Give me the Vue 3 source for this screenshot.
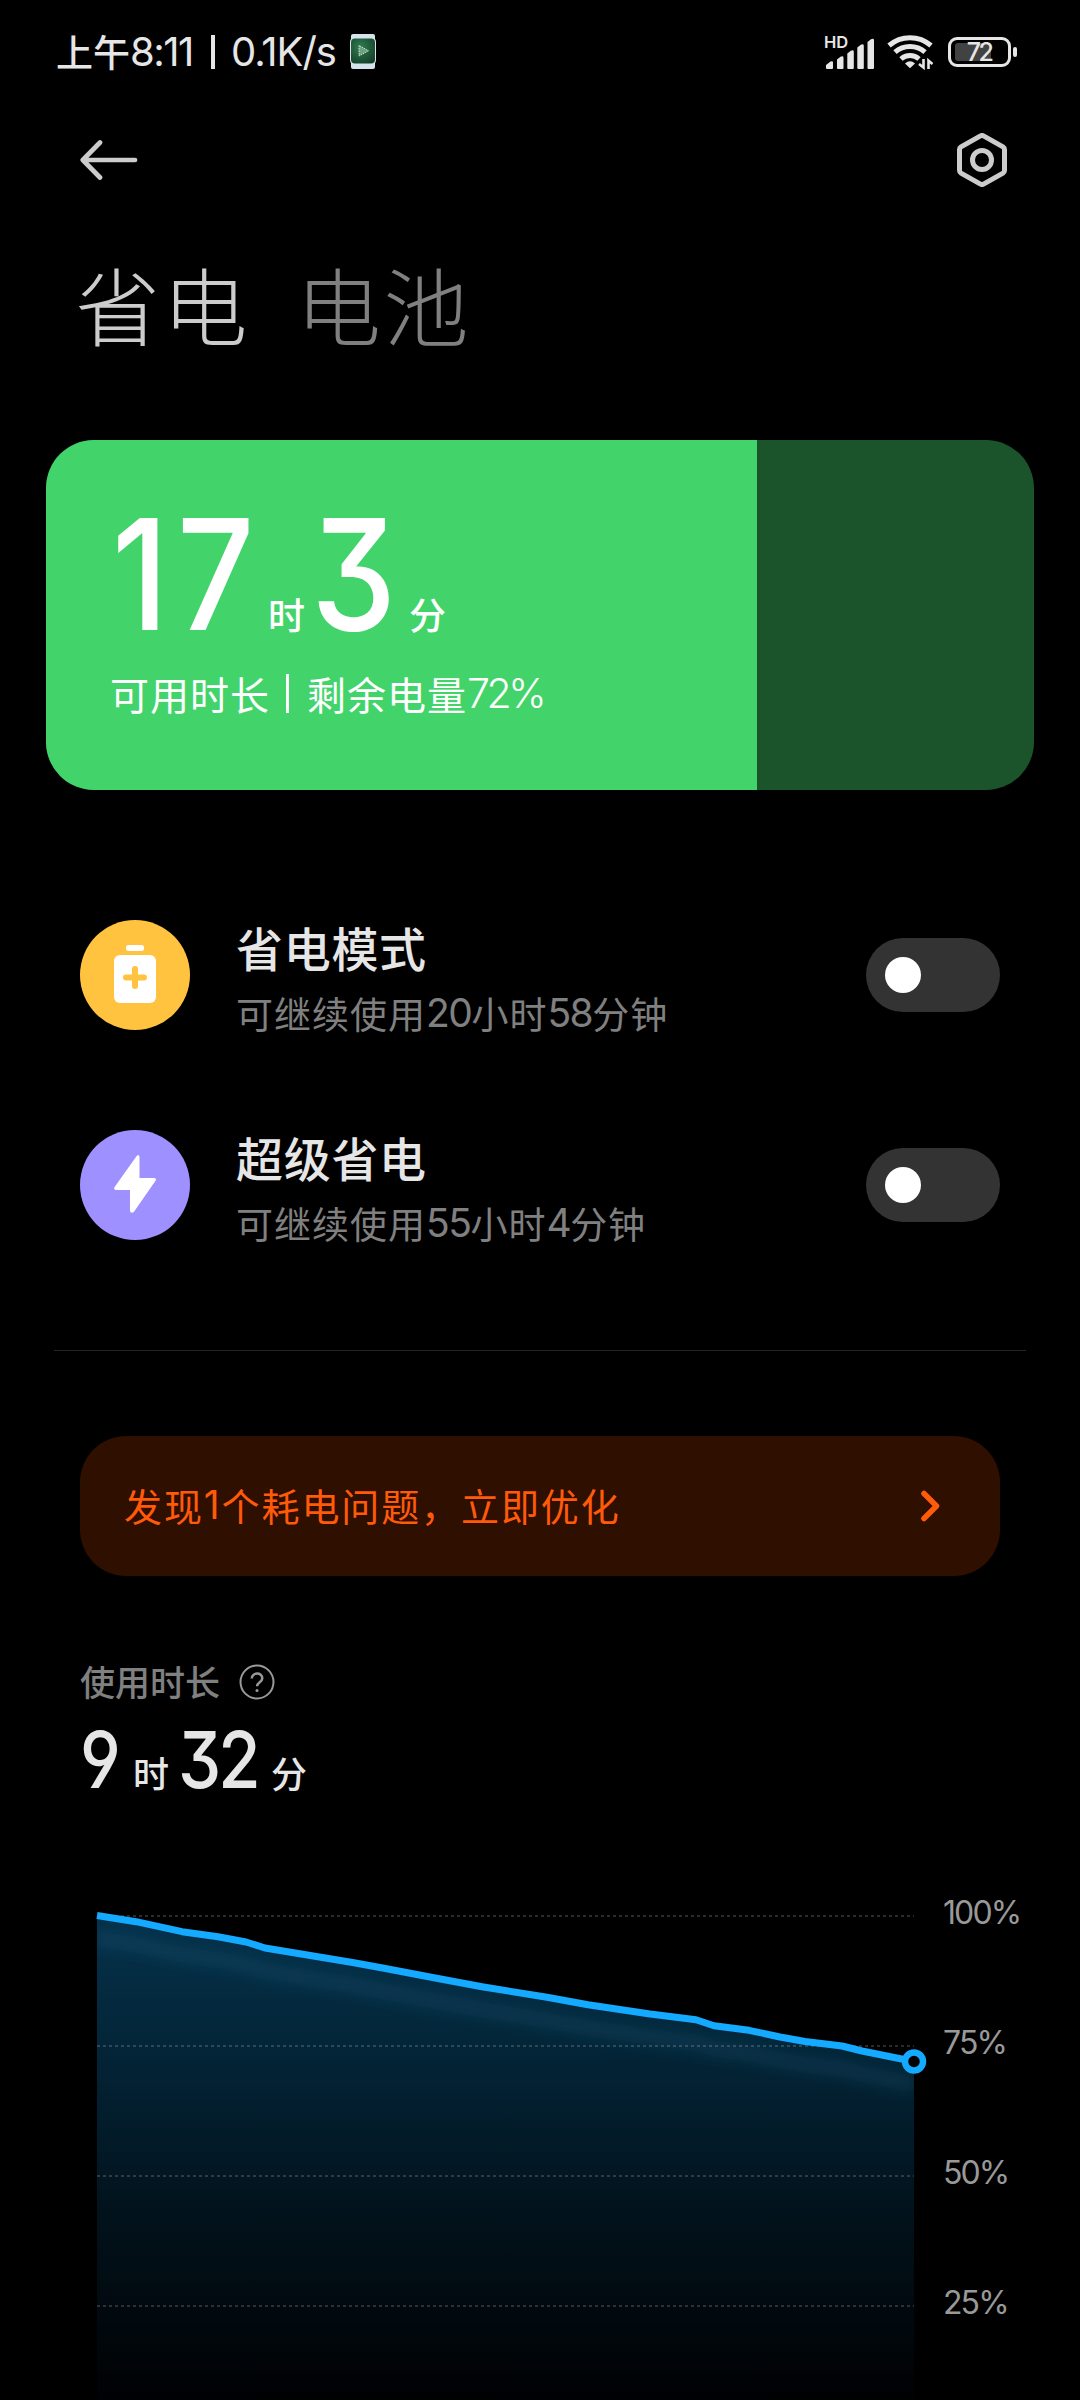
<script setup>
import { computed } from 'vue'

const batteryLevel = 72

const modes = [
  { id: 'saver', title: '省电模式', parts: ['可继续使用', '20', '小时', '58', '分钟'] },
  { id: 'ultra', title: '超级省电', parts: ['可继续使用', '55', '小时', '4', '分钟'] },
]

const gridLines = [
  { label: '100%', y: 116 },
  { label: '75%', y: 246 },
  { label: '50%', y: 376 },
  { label: '25%', y: 506 },
]

const points = [
  [97, 115.5], [136, 121.7], [182, 131.7], [218, 136.7], [246, 142], [265, 148],
  [354, 162.7], [384, 168.3], [436.5, 178.3], [482, 186.7], [547, 197.3], [588, 204.7],
  [650, 214], [696, 219.7], [714, 225.7], [749, 230.3], [780, 237], [805, 241.5],
  [842, 246], [862, 251], [914, 261.5],
]
const line = computed(() => 'M' + points.map((p) => p.join(' ')).join('L'))
const area = computed(() => line.value + 'V600H97Z')
</script>

<template>
  <main class="screen">
    <header class="status">
      <div class="status-left">
        <span class="zh">上午</span><span class="num clock">8:11</span><i class="bar"></i><span class="num speed">0.1K/s</span>
        <svg class="watch" width="26" height="36" viewBox="0 0 26 36">
          <defs>
            <radialGradient id="face" cx="40%" cy="35%" r="75%">
              <stop offset="0" stop-color="#2f7d50" /><stop offset="1" stop-color="#163f28" />
            </radialGradient>
          </defs>
          <rect x="1" y="0" width="24" height="35" rx="2" fill="#d5e3ec" />
          <rect x="0" y="4" width="26" height="26" rx="4" fill="#d5e3ec" />
          <rect x="1" y="4.500" width="24" height="25" rx="4" fill="url(#face)" />
          <path d="M9 11.500V22L18.500 16.800Z" fill="#6fa183" stroke="#cfe3d6" stroke-width="1" stroke-dasharray="1.500 1" />
        </svg>
      </div>
      <div class="status-right">
        <svg class="signal" width="54" height="56" viewBox="0 -10 54 56" fill="#e6e6e6">
          <text x="0" y="13" class="hd">HD</text>
          <path d="M2 33v-3l4.500-3.500q2.500-1 2.500 1V33q0 1-1 1H3q-1 0-1-1zM13 33v-8.500l3.500-2.800q3-1 3 1V33q0 1-1 1H14q-1 0-1-1zM23.300 33V18.500l3.500-2.800q3-1 3 1V33q0 1-1 1h-4.500q-1 0-1-1zM33.300 33V12.500l3.500-2.800q3-1 3 1V33q0 1-1 1h-4.500q-1 0-1-1zM43.500 33V7l3.500-2.800q3-1 3 1V33q0 1-1 1h-4.500q-1 0-1-1z" />
        </svg>
        <svg class="wifi" width="46" height="36" viewBox="0 0 46 36" fill="none" stroke="#e6e6e6" stroke-width="5">
          <path d="M2 11.500a32 32 0 0 1 42 0" />
          <path d="M8 18.200a22.500 22.500 0 0 1 30 0" />
          <path d="M14 25a13.500 13.500 0 0 1 18 0" />
          <path d="M18 29.500q5-4.500 10 0l-5 4.700z" fill="#e6e6e6" stroke="none" />
          <path d="M31 29h8v7h-8z" fill="#000" stroke="none" />
          <path d="M36.500 25v8.500l-4.500-3.500M41.500 35v-8.500l4 3.500" stroke-width="2.600" />
        </svg>
        <svg class="battery" width="70" height="30" viewBox="0 0 70 30">
          <rect x="1.500" y="1.500" width="60" height="27" rx="7.500" fill="none" stroke="#e6e6e6" stroke-width="3" />
          <rect x="7" y="6" width="36" height="18" rx="3" fill="#424242" />
          <rect x="65" y="10" width="4" height="10" rx="2" fill="#e6e6e6" />
          <text x="31" y="24" text-anchor="middle" class="level">{{ batteryLevel }}</text>
        </svg>
      </div>
    </header>

    <nav class="toolbar">
      <svg width="58" height="40" viewBox="0 0 58 40" fill="none" stroke="#ccc" stroke-width="4.700" stroke-linecap="round" stroke-linejoin="round">
        <path d="M55 20H3M20 2.500 2.800 20 20 37.500" />
      </svg>
      <svg width="50" height="54" viewBox="0 0 50 54" fill="none" stroke="#ccc" stroke-width="5">
        <path stroke-linejoin="round" d="M23.500 2.900q1.500-.8 3 0L46 13.900q1.500.9 1.500 2.500v21.200q0 1.600-1.500 2.500L26.500 51.100q-1.500.8-3 0L4 40.100q-1.500-.9-1.500-2.500V16.400q0-1.600 1.500-2.500z" />
        <circle cx="25" cy="27" r="9.500" />
      </svg>
    </nav>

    <div class="tabs">
      <span class="tab active">省电</span>
      <span class="tab">电池</span>
    </div>

    <section class="card">
      <div class="card-fill" :style="{ width: batteryLevel + '%' }">
        <div class="remain">
          <b class="num">17</b><small>时</small><b class="num three">3</b><small class="min">分</small>
        </div>
        <div class="card-sub">
          <span>可用时长</span><i></i><span>剩余电量</span><span class="num">{{ batteryLevel }}%</span>
        </div>
      </div>
    </section>

    <section class="modes">
      <article v-for="m in modes" :key="m.id" class="mode">
        <div class="mode-icon" :class="m.id">
          <svg v-if="m.id === 'saver'" width="42" height="58" viewBox="0 0 42 58">
            <rect x="12" y="0" width="18" height="6" rx="2.500" fill="#fff" />
            <rect x="0" y="10" width="42" height="48" rx="6" fill="#fff" />
            <path d="M21 24v17M12 32.500h18" stroke="#ffc340" stroke-width="6" stroke-linecap="round" />
          </svg>
          <svg v-else width="42" height="58" viewBox="0 0 42 58">
            <path d="M22.500 1.200Q25-1.500 25.500 2V23H40q3 .2 1.500 2.800L20 56.800q-3 2.400-4-.8V35H1.800Q-.8 34.600.6 32z" fill="#fff" />
          </svg>
        </div>
        <div class="mode-text">
          <h3>{{ m.title }}</h3>
          <p><span v-for="(t, i) in m.parts" :key="i" :class="{ num: i % 2 === 1 }">{{ t }}</span></p>
        </div>
        <div class="toggle"><i></i></div>
      </article>
    </section>

    <hr class="rule" />

    <section class="notice">
      <p><span>发现</span><span class="num">1</span><span>个耗电问题，立即优化</span></p>
      <svg width="22" height="34" viewBox="0 0 22 34" fill="none" stroke="#ff5c0a" stroke-width="5.500" stroke-linecap="round" stroke-linejoin="round">
        <path d="M4 4.500l12.500 12.500L4 29.500" />
      </svg>
    </section>

    <section class="usage">
      <div class="usage-label">
        <span>使用时长</span>
        <svg width="36" height="36" viewBox="0 0 36 36" fill="none" stroke="#999" stroke-width="2">
          <circle cx="18" cy="18" r="16.500" />
          <path d="M12.800 14.500c0-6.500 10.500-6.500 10.500-.2 0 4-5.200 4-5.200 8" stroke-width="2.500" />
          <circle cx="18" cy="26.500" r="1.500" fill="#999" stroke="none" />
        </svg>
      </div>
      <div class="usage-time">
        <b class="num">9</b><small>时</small><b class="num two">32</b><small class="min">分</small>
      </div>
    </section>

    <svg class="chart" width="1080" height="600" viewBox="0 0 1080 600">
      <defs>
        <linearGradient id="fade" gradientUnits="userSpaceOnUse" x1="0" y1="110" x2="0" y2="600">
          <stop offset="0" stop-color="#05324c" />
          <stop offset=".3" stop-color="#032436" />
          <stop offset=".6" stop-color="#02131d" />
          <stop offset="1" stop-color="#000103" />
        </linearGradient>
        <filter id="soft" x="-10%" y="-30%" width="120%" height="160%"><feGaussianBlur stdDeviation="7" /></filter>
        <clipPath id="under"><path :d="area" /></clipPath>
      </defs>
      <path :d="area" fill="url(#fade)" />
      <g clip-path="url(#under)">
        <path :d="line" transform="translate(0 23)" fill="none" stroke="#2a7096" stroke-opacity=".2" stroke-width="16" filter="url(#soft)" />
      </g>
      <g v-for="g in gridLines" :key="g.label">
        <path :d="`M97 ${g.y}H914`" stroke="#fff" stroke-opacity=".17" stroke-width="2" stroke-dasharray="3 3" />
        <text x="943" :y="g.y + 8" class="axis">{{ g.label }}</text>
      </g>
      <path :d="line" fill="none" stroke="#14aaff" stroke-width="7" stroke-linejoin="round" />
      <circle cx="914" cy="261.500" r="9" fill="#000" stroke="#14aaff" stroke-width="6.500" />
    </svg>
  </main>
</template>

<style>
body { background: #000; }
</style>

<style scoped>
.screen {
  width: 1080px; height: 2400px; overflow: hidden; background: #000; color: #e6e6e6;
  font-family: "Noto Sans CJK SC", sans-serif; display: flex; flex-direction: column;
}
.num, .axis, .hd, .level { font-family: Inter, "Noto Sans CJK SC", sans-serif; font-feature-settings: "cv09", "cv04", "kern"; }
b, small, h3, p { margin: 0; font-weight: 500; }
svg { display: block; flex: none; }
span, b, small { white-space: nowrap; }

.status { height: 106px; flex: none; display: flex; justify-content: space-between; padding: 0 62px 0 56px; }
.status-left { display: flex; align-items: center; height: 104px; font-weight: 500; }
.status-left .zh { font-size: 37px; line-height: 102px; padding-bottom: 2px; }
.clock, .speed { font-size: 40px; line-height: 104px; letter-spacing: -1.500px; font-weight: 430; }
.clock { width: 65px; }
.bar { width: 4px; height: 34px; background: #e6e6e6; margin: 0 16px 0 16px; }
.speed { width: 107px; letter-spacing: -1px; }
.watch { margin-left: 12px; }
.status-right { display: flex; align-items: center; height: 104px; }
.hd { font-size: 16.500px; font-weight: 600; }
.signal { margin-top: 2px; }
.wifi { margin-left: 9px; }
.battery { margin-left: 15px; }
.level { font-size: 25px; font-weight: 500; fill: #e6e6e6; letter-spacing: -2.500px; }

.toolbar { height: 108px; flex: none; display: flex; justify-content: space-between; align-items: center; padding: 0 73px 0 80px; }
.tabs { height: 226px; flex: none; display: flex; padding-left: 75px; gap: 46px; }
.tab { font-size: 85px; font-weight: 300; line-height: 177px; letter-spacing: 2.500px; color: #808080; }
.tab.active { color: #ccc; }

.card { height: 350px; flex: none; margin: 0 46px; border-radius: 48px; background: #1b542b; overflow: hidden; display: flex; }
.card-fill { background: #42d46a; color: #fff; padding: 44px 0 0 66px; box-sizing: border-box; }
.remain { display: flex; height: 184px; align-items: baseline; line-height: 180px; }
.remain b { font-size: 154px; font-weight: 450; letter-spacing: 10px; width: 156px; transform: scaleX(.88); transform-origin: left; }
.remain small { font-size: 37px; width: 43px; }
.remain .three { width: 98px; }
.card-sub { display: flex; align-items: center; height: 50px; margin-left: -2px; font-size: 39px; letter-spacing: 1px; line-height: 50px; font-weight: 400; }
.card-sub i { width: 3px; height: 39px; background: #fff; margin: 0 18px 0 16px; }
.card-sub .num { font-size: 41px; letter-spacing: -3.500px; font-weight: 360; }

.modes { padding-top: 130px; flex: none; }
.mode { height: 110px; margin-bottom: 100px; padding: 0 80px; display: flex; align-items: center; }
.mode-icon { width: 110px; height: 110px; border-radius: 50%; display: flex; align-items: center; justify-content: center; flex: none; }
.mode-icon svg { margin-bottom: 2px; }
.saver { background: #ffc340; }
.ultra { background: #9e91ff; }
.mode-text { margin-left: 46px; flex: 1; padding-top: 7px; }
.mode-text h3 { font-size: 47px; line-height: 60px; letter-spacing: .7px; }
.mode-text p { display: flex; font-size: 37px; line-height: 56px; letter-spacing: 1px; color: #808080; font-weight: 400; margin-top: 8px; }
.mode-text .num { font-size: 39px; letter-spacing: -1.500px; font-weight: 370; }
.toggle { width: 134px; height: 74px; border-radius: 37px; background: #333; display: flex; align-items: center; }
.toggle i { width: 36px; height: 36px; border-radius: 50%; background: #fff; margin-left: 19px; }

.rule { width: 972px; height: 1px; flex: none; border: 0; margin: 10px 54px 85px; background: #242424; }
.notice { height: 140px; flex: none; margin: 0 80px; padding: 0 58px 0 44px; border-radius: 46px; background: #2e0f00; display: flex; align-items: center; justify-content: space-between; color: #ff5a0a; }
.notice p { display: flex; font-size: 38px; line-height: 60px; letter-spacing: 1.900px; font-weight: 400; padding-bottom: 2px; }
.notice .num { font-size: 39px; }

.usage { height: 224px; flex: none; padding: 82px 0 0 80px; box-sizing: border-box; }
.usage-label { height: 48px; display: flex; align-items: center; color: #808080; font-size: 35px; font-weight: 500; line-height: 48px; }
.usage-label span { padding-bottom: 2px; }
.usage-label svg { margin-left: 19px; }
.usage-time { height: 94px; margin-top: 6px; display: flex; align-items: baseline; line-height: 94px; }
.usage-time b { font-size: 79px; width: 53px; font-weight: 450; transform: scaleX(.87); transform-origin: left; }
.usage-time small { font-size: 36px; width: 45px; }
.usage-time .two { width: 93px; letter-spacing: -3.500px; }

.chart { flex: none; }
.axis { font-size: 32px; font-weight: 370; fill: #999; letter-spacing: -1.900px; }
</style>
